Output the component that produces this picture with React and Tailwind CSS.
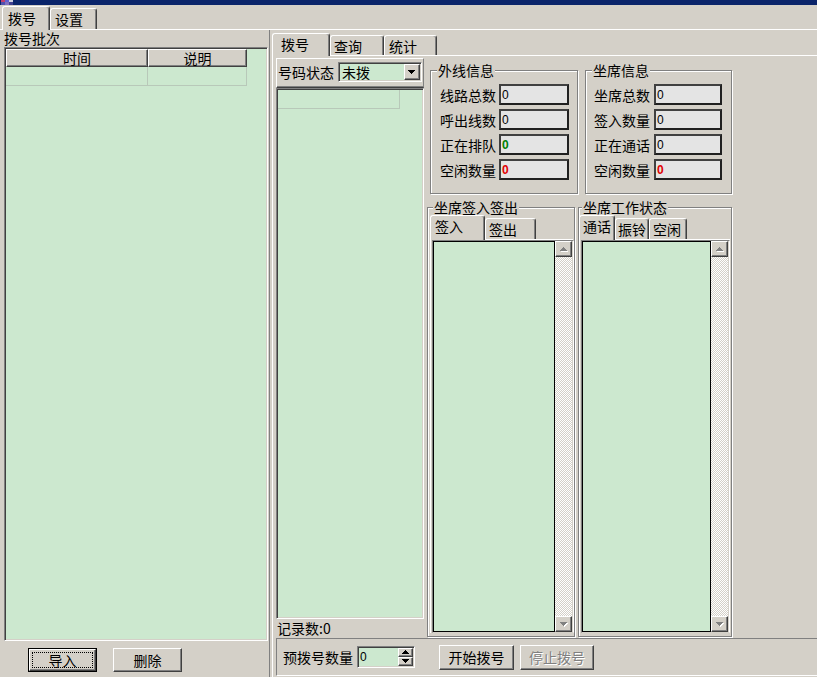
import React from "react";

const RAISED =
  "border border-t-white border-l-white border-r-[#404040] border-b-[#404040] shadow-[inset_-1px_-1px_0_#808080] bg-[#d4d0c8]";
const SUNKEN =
  "border border-t-[#808080] border-l-[#808080] border-r-white border-b-white p-[1px] shadow-[inset_1px_1px_0_#404040,inset_-1px_-1px_0_#d4d0c8]";
const GREEN = "bg-[#cce8cf]";
const TAB =
  "bg-[#d4d0c8] border-t border-l border-r border-t-white border-l-white border-r-[#404040] shadow-[inset_-1px_0_0_#808080] rounded-t-[3px] leading-[16px]";
const CHECKER =
  "bg-[repeating-conic-gradient(#d4d0c8_0%_25%,#ffffff_0%_50%)] bg-[length:2px_2px]";

function Tri({ up = false, color = "#000", shadow = false }) {
  return (
    <svg width="8" height="5" viewBox="0 0 8 5" shapeRendering="crispEdges">
      {shadow && (
        <polygon
          points={up ? "1,5 8,5 4.5,1" : "1,1 8,1 4.5,5"}
          fill="#ffffff"
        />
      )}
      <polygon points={up ? "0,4 7,4 3.5,0" : "0,0 7,0 3.5,4"} fill={color} />
    </svg>
  );
}

function ScrollBar() {
  return (
    <div className={`w-[17px] flex flex-col ${CHECKER}`}>
      <div className={`h-[16px] w-[17px] ${RAISED} flex items-center justify-center`}>
        <Tri up color="#808080" shadow />
      </div>
      <div className="flex-1" />
      <div className={`h-[16px] w-[17px] ${RAISED} flex items-center justify-center`}>
        <Tri color="#808080" shadow />
      </div>
    </div>
  );
}

function ValueBox({ value, kind, wClass }) {
  const color =
    kind === "green"
      ? "text-[#008000] font-bold"
      : kind === "red"
      ? "text-[#e00000] font-bold"
      : "text-black";
  return (
    <div
      className={`${wClass} h-[21px] border-2 border-t-[#404040] border-l-[#404040] border-r-[#202020] border-b-[#202020] bg-[#e4e4e4] flex items-center pl-[1px] font-['Liberation_Sans',sans-serif] text-[12px] leading-[14px] ${color}`}
    >
      {value}
    </div>
  );
}

function InfoRow({ label, value, kind, wClass, gapClass }) {
  return (
    <div className={`flex items-center ${gapClass}`}>
      <span className="w-[56px] leading-[16px] whitespace-nowrap">{label}</span>
      <ValueBox value={value} kind={kind} wClass={wClass} />
    </div>
  );
}

function Button({ children, className = "", disabled = false }) {
  return (
    <div
      className={`${className} ${RAISED} flex items-center justify-center leading-[16px] ${
        disabled ? "text-[#808080] [text-shadow:1px_1px_0_#ffffff]" : ""
      }`}
    >
      {children}
    </div>
  );
}

const FIELDSET =
  "min-w-0 border border-[#808080] shadow-[inset_1px_1px_0_#ffffff,1px_1px_0_#ffffff]";

export default function App() {
  return (
    <div className="w-[817px] h-[677px] overflow-hidden bg-[#d4d0c8] flex flex-col text-[14px] leading-[16px] text-black font-['Noto_Sans_CJK_SC','Noto_Sans',sans-serif]">
      {/* title bar sliver */}
      <div className="h-[5px] shrink-0 bg-[#0a246a] flex overflow-hidden">
        <div className="ml-[1px] w-[12px] h-[5px] flex flex-col">
          <div className="h-[2px] flex">
            <div className="w-[4px] bg-[#c04070]" />
            <div className="w-[4px] bg-[#6060d0]" />
            <div className="w-[4px] bg-[#d0d0e0]" />
          </div>
          <div className="h-[3px] flex">
            <div className="w-[4px] bg-[#5050b0]" />
            <div className="w-[4px] bg-[#8070c0]" />
            <div className="w-[4px] bg-[#404090]" />
          </div>
        </div>
      </div>

      {/* top tabs */}
      <div className="h-[25px] shrink-0 flex items-end pl-[2px] border-b border-white">
        <div className={`${TAB} relative z-10 -mb-px w-[48px] h-[24px] pl-[5px] pt-[3px]`}>拨号</div>
        <div className={`${TAB} w-[47px] h-[21px] pl-[4px] pt-[2px]`}>设置</div>
      </div>

      <div className="flex-1 flex min-h-0">
        {/* left column */}
        <div className="w-[270px] shrink-0 flex flex-col border-r border-r-[#808080]">
          <div className="h-[17px] pl-[4px] leading-[17px]">拨号批次</div>
          <div className={`ml-[4px] w-[264px] h-[594px] ${SUNKEN} ${GREEN}`}>
            <div className="flex h-[18px]">
              <div className={`w-[142px] h-[18px] ${RAISED} text-center leading-[16px]`}>时间</div>
              <div className={`w-[99px] h-[18px] ${RAISED} text-center leading-[16px]`}>说明</div>
            </div>
            <div className="flex h-[19px]">
              <div className="w-[142px] border-r border-b border-[#b8c8b9]" />
              <div className="w-[99px] border-r border-b border-[#b8c8b9]" />
            </div>
          </div>
          <div className="flex pt-[7px]">
            <div className="ml-[28px] w-[69px] h-[24px] border border-black">
              <div className={`w-full h-full ${RAISED} p-[2px]`}>
                <div className="w-full h-full border border-dotted border-black flex items-center justify-center leading-[14px]">
                  导入
                </div>
              </div>
            </div>
            <Button className="ml-[16px] w-[69px] h-[24px]">删除</Button>
          </div>
        </div>

        {/* right column */}
        <div className="flex-1 flex flex-col pl-[2px] min-w-0">
          <div className="h-[25px] shrink-0 flex items-end">
            <div className={`${TAB} relative z-10 -mb-px w-[58px] h-[23px] pl-[8px] pt-[2px]`}>拨号</div>
            <div className={`${TAB} w-[54px] h-[20px] pl-[3px] pt-[2px]`}>查询</div>
            <div className={`${TAB} w-[53px] h-[20px] pl-[4px] pt-[2px]`}>统计</div>
          </div>

          <div className="flex-1 flex flex-col border-l border-t border-white pl-[3px] pt-[2px] min-h-0">
            <div className="h-[580px] flex shrink-0">
              {/* middle column */}
              <div className="w-[148px] flex flex-col shrink-0">
                <div className="h-[30px] border border-t-white border-l-white border-r-[#808080] border-b-[#404040] shadow-[inset_0_-1px_0_#808080] flex items-start pt-[3px] pl-[1px]">
                  <span className="leading-[20px] whitespace-nowrap">号码状态</span>
                  <div className={`ml-[4px] w-[84px] h-[20px] ${SUNKEN} ${GREEN} flex items-center`}>
                    <span className="flex-1 pl-[2px] leading-[16px]">未拨</span>
                    <div className={`w-[16px] h-[16px] ${RAISED} flex items-center justify-center`}>
                      <Tri />
                    </div>
                  </div>
                </div>
                <div className={`h-[531px] ${SUNKEN} ${GREEN}`}>
                  <div className="w-[122px] h-[19px] border-r border-b border-[#b8c8b9]" />
                </div>
                <div className="h-[19px] pl-[1px] leading-[19px] whitespace-nowrap">记录数:0</div>
              </div>

              {/* right area */}
              <div className="ml-[3px] flex flex-col">
                <div className="h-[142px] flex pt-[5px] pl-[3px] gap-[7px]">
                  <fieldset className={`w-[148px] h-[131px] ${FIELDSET}`}>
                    <legend className="ml-[6px] px-[1px] leading-[14px] bg-[#d4d0c8]">外线信息</legend>
                    <div className="flex flex-col gap-[4px] pt-[7px] pl-[9px]">
                      <InfoRow label="线路总数" value="0" wClass="w-[70px]" gapClass="gap-[3px]" />
                      <InfoRow label="呼出线数" value="0" wClass="w-[70px]" gapClass="gap-[3px]" />
                      <InfoRow label="正在排队" value="0" kind="green" wClass="w-[70px]" gapClass="gap-[3px]" />
                      <InfoRow label="空闲数量" value="0" kind="red" wClass="w-[70px]" gapClass="gap-[3px]" />
                    </div>
                  </fieldset>
                  <fieldset className={`w-[147px] h-[131px] ${FIELDSET}`}>
                    <legend className="ml-[6px] px-[1px] leading-[14px] bg-[#d4d0c8]">坐席信息</legend>
                    <div className="flex flex-col gap-[4px] pt-[7px] pl-[8px]">
                      <InfoRow label="坐席总数" value="0" wClass="w-[68px]" gapClass="gap-[4px]" />
                      <InfoRow label="签入数量" value="0" wClass="w-[68px]" gapClass="gap-[4px]" />
                      <InfoRow label="正在通话" value="0" wClass="w-[68px]" gapClass="gap-[4px]" />
                      <InfoRow label="空闲数量" value="0" kind="red" wClass="w-[68px]" gapClass="gap-[4px]" />
                    </div>
                  </fieldset>
                </div>

                <div className="h-[437px] flex gap-[3px]">
                  <fieldset className={`w-[148px] h-[437px] ${FIELDSET}`}>
                    <legend className="ml-[5px] px-[1px] leading-[14px] bg-[#d4d0c8]">坐席签入签出</legend>
                    <div className="h-[25px] flex items-end pl-[2px]">
                      <div className={`${TAB} relative z-10 -mb-px w-[55px] h-[25px] pl-[4px] pt-[2px]`}>签入</div>
                      <div className={`${TAB} w-[51px] h-[21px] pl-[3px] pt-[2px]`}>签出</div>
                    </div>
                    <div className="ml-[2px] w-[143px] border-t border-l border-white pl-[1px]">
                      <div className="h-[393px] w-[142px] border border-t-[#808080] border-l-[#808080] border-r-white border-b-[#d4d0c8] flex">
                        <div className={`flex-1 border border-black ${GREEN}`} />
                        <ScrollBar />
                        <div className="w-[1px]" />
                      </div>
                    </div>
                  </fieldset>
                  <fieldset className={`w-[154px] h-[437px] ${FIELDSET}`}>
                    <legend className="ml-[3px] px-[1px] leading-[14px] bg-[#d4d0c8]">坐席工作状态</legend>
                    <div className="h-[25px] flex items-end pl-[0px]">
                      <div className={`${TAB} relative z-10 -mb-px w-[36px] h-[25px] pl-[3px] pt-[2px]`}>通话</div>
                      <div className={`${TAB} w-[34px] h-[21px] pl-[2px] pt-[2px]`}>振铃</div>
                      <div className={`${TAB} w-[38px] h-[21px] pl-[3px] pt-[2px]`}>空闲</div>
                    </div>
                    <div className="w-[151px] border-t border-l border-white pl-[1px]">
                      <div className="h-[393px] w-[149px] border border-t-[#808080] border-l-[#808080] border-r-white border-b-[#d4d0c8] flex">
                        <div className={`flex-1 border border-black ${GREEN}`} />
                        <ScrollBar />
                        <div className="w-[1px]" />
                      </div>
                    </div>
                  </fieldset>
                </div>
              </div>
            </div>

            {/* bottom strip */}
            <div className="h-[38px] shrink-0 flex items-center border-t border-l border-[#808080] border-b border-b-white pl-[6px]">
              <span className="leading-[16px] whitespace-nowrap">预拨号数量</span>
              <div className={`ml-[4px] w-[58px] h-[22px] ${SUNKEN} ${GREEN} flex`}>
                <span className="flex-1 pl-[1px] leading-[16px] font-['Liberation_Sans',sans-serif] text-[12px] self-center">
                  0
                </span>
                <div className="w-[15px] flex flex-col">
                  <div className={`h-[9px] ${RAISED} flex items-center justify-center`}>
                    <Tri up />
                  </div>
                  <div className={`h-[9px] ${RAISED} flex items-center justify-center`}>
                    <Tri />
                  </div>
                </div>
              </div>
              <Button className="ml-[24px] w-[75px] h-[25px]">开始拨号</Button>
              <Button className="ml-[6px] w-[74px] h-[25px]" disabled>
                停止拨号
              </Button>
            </div>
          </div>
        </div>
      </div>
    </div>
  );
}
